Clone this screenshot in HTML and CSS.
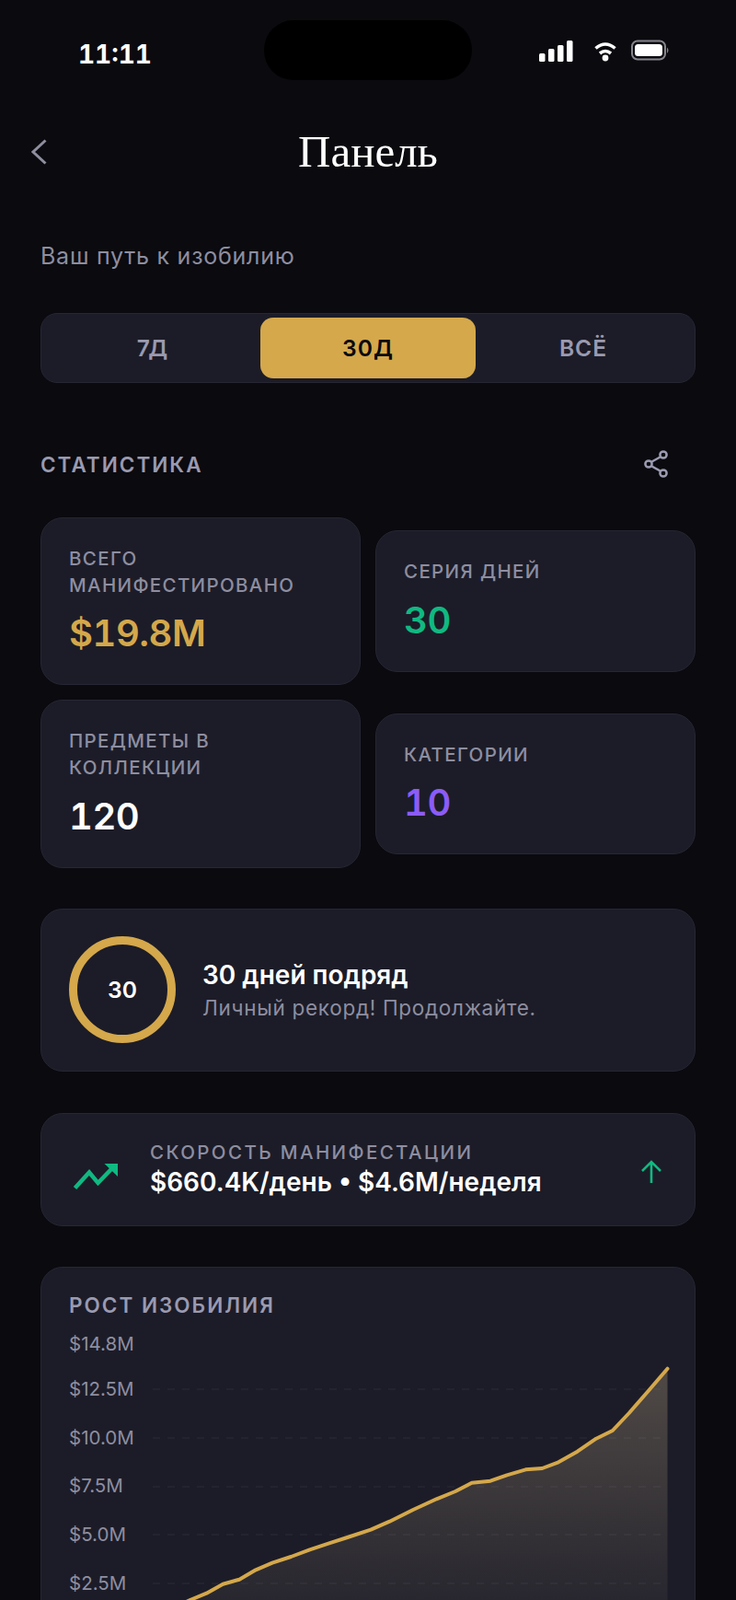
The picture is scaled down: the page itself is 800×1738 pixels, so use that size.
FILE: index.html
```html
<!DOCTYPE html>
<html lang="ru">
<head>
    <meta charset="UTF-8">
    <title>Панель</title>
    <link rel="stylesheet" href="styles.css">
</head>
<body>
    <div class="screen">
        <div class="status">
            <span class="time">11:11</span>
            <div class="island"></div>
            <svg class="status-icons" width="142" height="26" viewBox="585 47 142 26">
                <rect x="585" y="62" width="6.5" height="9" rx="1.5" fill="#fff"/>
                <rect x="595" y="57" width="6.5" height="14" rx="1.5" fill="#fff"/>
                <rect x="605" y="53" width="6.5" height="18" rx="1.5" fill="#fff"/>
                <rect x="615" y="48" width="6.5" height="23" rx="1.5" fill="#fff"/>
                <path d="M646.5 56.5Q657 47.5 667.5 56.5M651 62Q657 57 663 62" fill="none" stroke="#fff" stroke-width="3.6"/>
                <circle cx="657" cy="67" r="3.4" fill="#fff"/>
                <rect x="686" y="48.5" width="36" height="20" rx="6" fill="none" stroke="#85858d" stroke-width="2"/>
                <rect x="689" y="52" width="30" height="13" rx="3.5" fill="#fff"/>
                <path d="M724 55.5Q727 58.500 724 62z" fill="#85858d"/>
            </svg>
        </div>

        <header class="topbar">
            <svg class="back" width="18" height="28" viewBox="0 0 18 28">
                <path d="M15.500 1.500L2 14l13.500 12.500" fill="none" stroke="#8e8e9e" stroke-width="3"/>
            </svg>
            <h1>Панель</h1>
        </header>

        <p class="subtitle">Ваш путь к изобилию</p>

        <div class="tabs">
            <div class="tab">7Д</div>
            <div class="tab active">30Д</div>
            <div class="tab">ВСЁ</div>
        </div>

        <div class="section-head">
            <h2>Статистика</h2>
            <svg class="share" width="30" height="32" viewBox="0 0 30 32">
                <path d="M10.500 13.500L19.500 8.500M10.500 18.500L19.500 23.500" stroke="#9a9ab0" stroke-width="2.500"/>
                <circle cx="23" cy="6" r="3.600" fill="none" stroke="#9a9ab0" stroke-width="2.500"/>
                <circle cx="7" cy="16" r="3.600" fill="none" stroke="#9a9ab0" stroke-width="2.500"/>
                <circle cx="23" cy="26" r="3.600" fill="none" stroke="#9a9ab0" stroke-width="2.500"/>
            </svg>
        </div>

        <div class="stats">
            <div class="card stat">
                <div class="stat-label">Всего манифестировано</div>
                <div class="stat-value gold">$19.8M</div>
            </div>
            <div class="card stat">
                <div class="stat-label">Серия дней</div>
                <div class="stat-value green">30</div>
            </div>
            <div class="card stat">
                <div class="stat-label">Предметы в коллекции</div>
                <div class="stat-value">120</div>
            </div>
            <div class="card stat">
                <div class="stat-label">Категории</div>
                <div class="stat-value purple">10</div>
            </div>
        </div>

        <div class="card streak">
            <div class="ring">30</div>
            <div>
                <div class="streak-title">30 дней подряд</div>
                <div class="streak-sub">Личный рекорд! Продолжайте.</div>
            </div>
        </div>

        <div class="card velocity">
            <svg class="trend" width="50" height="30" viewBox="0 0 50 30">
                <path d="M2.500 27.500L18 10.500l9.500 11.500L42 7" fill="none" stroke="#10b981" stroke-width="4.500"/>
                <path d="M34.500 1H49V15z" fill="#10b981"/>
            </svg>
            <div class="velocity-text">
                <div class="velocity-label">Скорость манифестации</div>
                <div class="velocity-value">$660.4K/день • $4.6M/неделя</div>
            </div>
            <svg class="up" width="24" height="26" viewBox="0 0 24 26">
                <path d="M12 25V2M2 12L12 2l10 10" fill="none" stroke="#10b981" stroke-width="2.600"/>
            </svg>
        </div>

        <div class="card chart">
            <h3>Рост изобилия</h3>
            <div class="chart-body">
                <div class="axis">
                    <span>$14.8M</span>
                    <span>$12.5M</span>
                    <span>$10.0M</span>
                    <span>$7.5M</span>
                    <span>$5.0M</span>
                    <span>$2.5M</span>
                </div>
                <svg class="plot" width="562" height="320" viewBox="166 1450 562 320">
                    <defs>
                        <linearGradient id="fade" x1="0" y1="1487" x2="0" y2="1770" gradientUnits="userSpaceOnUse">
                            <stop offset="0" stop-color="#c9b48c" stop-opacity="0.3"/>
                            <stop offset="1" stop-color="#c9b48c" stop-opacity="0.04"/>
                        </linearGradient>
                    </defs>
                    <g class="grid">
                        <path d="M166 1509H725M166 1562H725M166 1615H725M166 1667H725M166 1720H725"/>
                    </g>
                    <path d="M186 1748L206.600 1738 224.500 1730.700 242.300 1720.700 260.200 1715.700 278 1705.300 296 1697.700 316.300 1691 336.700 1683.300 357 1676.700 377.600 1670 403 1661.700 423.500 1652.700 449 1640 474.500 1628.300 495 1620 512.800 1610.700 533 1608.700 551 1602.300 571.400 1596.300 589.300 1595 607 1588.300 627.600 1576.700 648 1562.700 665.800 1554 683.700 1535 704 1511.700 725.500 1486.700V1770H186z" fill="url(#fade)"/>
                    <path d="M186 1748L206.600 1738 224.500 1730.700 242.300 1720.700 260.200 1715.700 278 1705.300 296 1697.700 316.300 1691 336.700 1683.300 357 1676.700 377.600 1670 403 1661.700 423.500 1652.700 449 1640 474.500 1628.300 495 1620 512.800 1610.700 533 1608.700 551 1602.300 571.400 1596.300 589.300 1595 607 1588.300 627.600 1576.700 648 1562.700 665.800 1554 683.700 1535 704 1511.700 725.500 1486.700" fill="none" stroke="#d4a84b" stroke-width="4" stroke-linejoin="round" stroke-linecap="round"/>
                </svg>
            </div>
        </div>
    </div>
</body>
</html>
```

FILE: styles.css
```css
* {
    box-sizing: border-box;
}

body {
    margin: 0;
    background: #0a0a0f;
    color: #fff;
    font-family: 'Inter', sans-serif;
}

.screen {
    width: 800px;
    height: 1738px;
    padding: 22px 44px 0;
    overflow: hidden;
}

.status {
    display: grid;
    grid-template-columns: 1fr 226px 1fr;
    align-items: center;
    height: 65px;
    margin: 0 -44px;
}

.time {
    padding-left: 85px;
    padding-top: 8px;
    font-size: 28px;
    font-weight: 700;
    font-variant-numeric: tabular-nums;
}

.island {
    height: 65px;
    border-radius: 32px;
    background: #000;
}

.status-icons {
    justify-self: end;
    margin-right: 72px;
    margin-top: 3px;
}

.topbar {
    display: grid;
    grid-template-columns: 1fr auto 1fr;
    align-items: center;
    height: 64px;
    margin: 46px -44px 0;
    padding-left: 34px;
}

.topbar h1 {
    margin: 0;
    padding-right: 34px;
    font-family: 'Liberation Serif', serif;
    font-size: 49px;
    font-weight: 400;
    line-height: 64px;
}

.subtitle {
    margin: 65px 0 0;
    color: #8e8ea0;
    font-size: 25px;
    line-height: 32px;
    letter-spacing: 0.750px;
}

.tabs {
    display: flex;
    height: 76px;
    margin-top: 46px;
    padding: 4px;
    border: 1px solid #262634;
    border-radius: 18px;
    background: #1c1c28;
}

.tab {
    flex: 1;
    display: flex;
    align-items: center;
    justify-content: center;
    border-radius: 14px;
    color: #9a9ab0;
    font-size: 24.600px;
    font-weight: 600;
    letter-spacing: 1px;
}

.tab.active {
    background: #d4a84b;
    color: #0a0a0f;
}

.section-head {
    display: flex;
    align-items: center;
    justify-content: space-between;
    height: 32px;
    margin-top: 72px;
    padding-right: 28px;
}

.section-head h2 {
    margin: 0;
    color: #9a9ab0;
    font-size: 22.500px;
    font-weight: 600;
    letter-spacing: 2px;
    text-transform: uppercase;
}

.stats {
    display: grid;
    grid-template-columns: 1fr 1fr;
    gap: 16px;
    align-items: center;
    margin-top: 42px;
}

.card {
    border: 1px solid #262634;
    border-radius: 24px;
    background: #1c1c28;
}

.stat {
    padding: 30px 30px 31px;
}

.stat-label {
    color: #8e8ea0;
    font-size: 20.500px;
    font-weight: 500;
    line-height: 28.700px;
    letter-spacing: 1.350px;
    text-transform: uppercase;
}

.stat-value {
    margin-top: 14px;
    font-size: 40px;
    font-weight: 600;
    font-variant-numeric: tabular-nums;
    line-height: 48px;
    letter-spacing: -0.500px;
}

.gold {
    color: #d4a84b;
}

.green {
    color: #10b981;
}

.purple {
    color: #8b5cf6;
}

.streak {
    display: flex;
    align-items: center;
    gap: 29px;
    height: 177px;
    margin-top: 44px;
    padding: 0 30px;
}

.ring {
    display: flex;
    align-items: center;
    justify-content: center;
    width: 116px;
    height: 116px;
    border: 9px solid #d4a84b;
    border-radius: 50%;
    font-size: 24.600px;
    font-weight: 600;
}

.streak-title {
    font-size: 28px;
    font-weight: 600;
    line-height: 38px;
}

.streak-sub {
    margin-top: 2px;
    color: #8e8ea0;
    font-size: 22.500px;
    line-height: 30px;
    letter-spacing: 0.700px;
}

.velocity {
    display: flex;
    align-items: center;
    height: 123px;
    margin-top: 45px;
    padding: 0 35px 0 34px;
}

.trend {
    margin: 16px 34px 0 0;
}

.velocity-text {
    flex: 1;
}

.velocity-label {
    color: #8e8ea0;
    font-size: 20.500px;
    font-weight: 500;
    line-height: 28px;
    letter-spacing: 2.400px;
    text-transform: uppercase;
}

.velocity-value {
    font-size: 28px;
    font-weight: 600;
    line-height: 36px;
}

.up {
    margin-top: 6px;
}

.chart {
    height: 420px;
    margin-top: 44px;
    padding: 26px 30px;
}

.chart h3 {
    margin: 0;
    color: #9a9ab0;
    font-size: 22.500px;
    font-weight: 600;
    line-height: 30px;
    letter-spacing: 2px;
    text-transform: uppercase;
}

.chart-body {
    display: flex;
    margin-top: 12px;
}

.axis {
    display: flex;
    flex: none;
    flex-direction: column;
    width: 91px;
    color: #8e8ea0;
    font-size: 20.500px;
}

.axis span {
    height: 52.700px;
    line-height: 30px;
}

.axis span:first-child {
    height: 49px;
}

.plot {
    flex: none;
    margin-top: 5px;
}

.grid path {
    fill: none;
    stroke: #262633;
    stroke-width: 1.500;
    stroke-dasharray: 8 8;
}
```
